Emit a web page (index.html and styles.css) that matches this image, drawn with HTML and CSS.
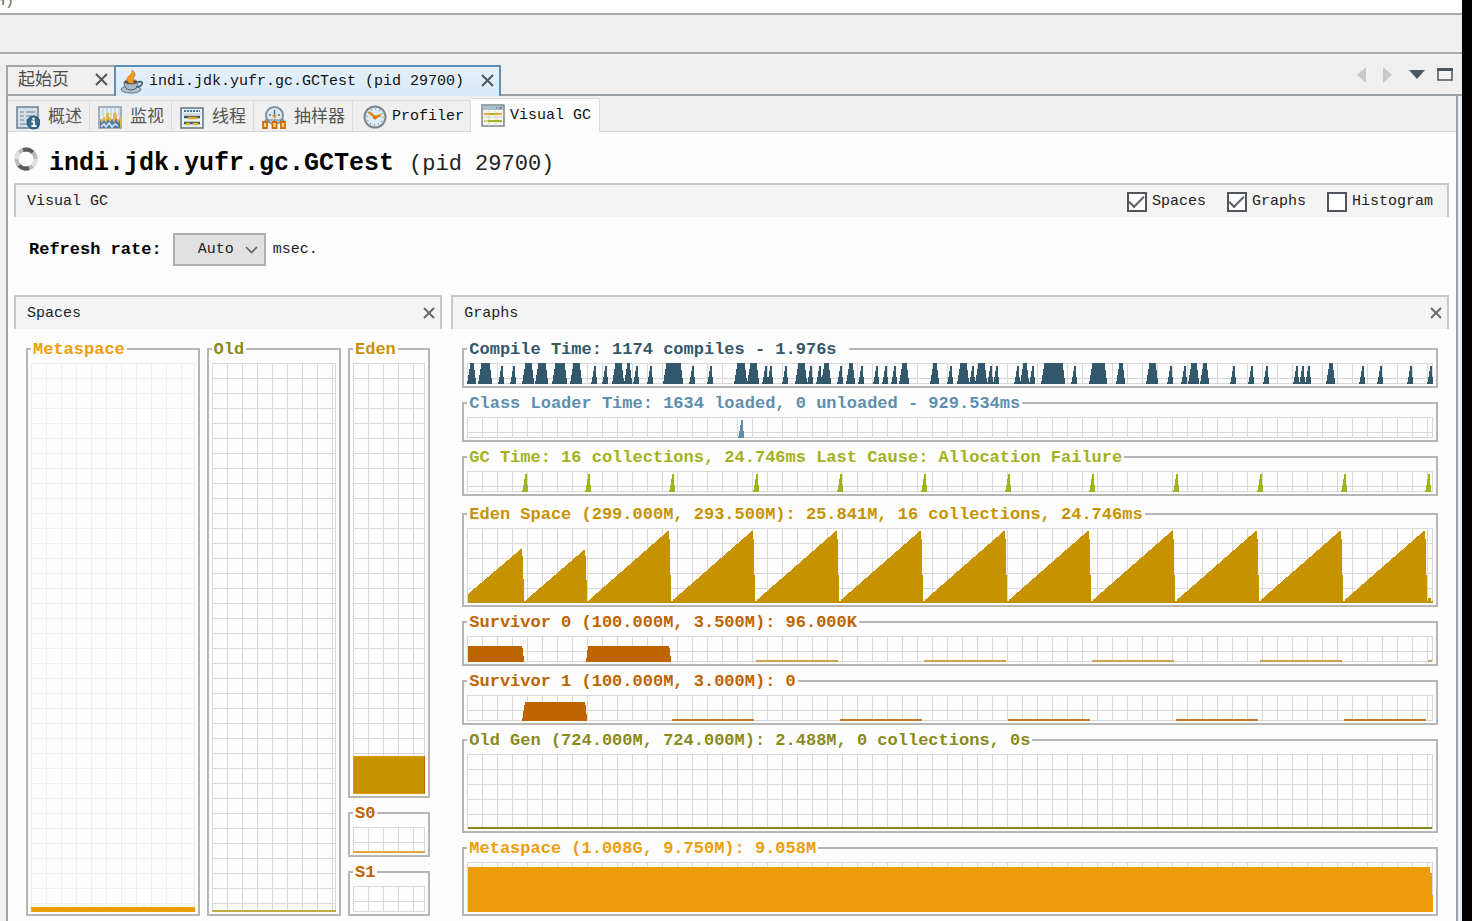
FILE: index.html
```html
<!DOCTYPE html>
<html lang="zh-CN">
<head>
<meta charset="utf-8">
<title>VisualVM</title>
<link rel="stylesheet" href="styles.css">
</head>
<body>
<div class="window">
  <div class="menubar"><span>H)</span></div>
  <div class="toolbar"></div>

  <div class="doc-tabs">
    <div class="doc-tab">
      <span>起始页</span>
      <button class="close" aria-label="关闭起始页"><svg width="13" height="13" viewBox="0 0 13 13"><path d="M1 1l11 11M12 1L1 12"/></svg></button>
    </div>
    <div class="doc-tab doc-tab-active">
      <svg width="24" height="24" viewBox="0 0 24 24">
        <ellipse cx="11" cy="19.500" rx="10" ry="3.500" fill="#b3c1cc" stroke="#5d7285"/>
        <path d="M4 12q0 8 7 8t7-8z" fill="#a9bbc8" stroke="#4b657a"/>
        <path d="M18 12q5-1 4 2t-6 3" fill="none" stroke="#4b657a" stroke-width="2"/>
        <ellipse cx="11" cy="12" rx="7" ry="2.500" fill="#5b4636" stroke="#8ea4b5"/>
        <path d="M9 13Q5 8 10 5q3-2 2-5 5 4 2 7-2 2 0 6z" fill="#ef9a22" stroke="#cf7a10" stroke-width=".7"/>
      </svg>
      <span>indi.jdk.yufr.gc.GCTest (pid 29700)</span>
      <button class="close" aria-label="关闭 GCTest"><svg width="13" height="13" viewBox="0 0 13 13"><path d="M1 1l11 11M12 1L1 12"/></svg></button>
    </div>
    <div class="doc-nav">
      <button aria-label="向左"><svg width="9" height="16" viewBox="0 0 9 16"><path d="M9 0v16L0 8z" fill="#c6c8c9"/></svg></button>
      <button aria-label="向右"><svg width="9" height="16" viewBox="0 0 9 16"><path d="M0 0v16l9-8z" fill="#c6c8c9"/></svg></button>
      <button aria-label="文档列表"><svg width="16" height="9" viewBox="0 0 16 9"><path d="M0 0h16L8 9z" fill="#4d555c"/></svg></button>
      <button aria-label="最大化"><svg width="16" height="13" viewBox="0 0 16 13"><path d="M1 1h14v11H1z" fill="#f3f3f3" stroke="#4d555c" stroke-width="1.500"/><path d="M0 0h16v3H0z" fill="#4d555c"/></svg></button>
    </div>
  </div>

  <div class="editor">
    <nav class="view-tabs">
      <button class="view-tab">
        <svg width="24" height="24" viewBox="0 0 24 24"><path d="M1 1h21v21H1z" fill="#d3dfe8" stroke="#6d7f8d" stroke-width="1.500"/><path d="M4 6h4M10 6h9M4 10h4M10 10h9M4 14h4M10 14h5M4 18h7" stroke="#8da3b4" stroke-width="1.500"/><circle cx="17.500" cy="16.500" r="6.500" fill="#39698c" stroke="#2b536f"/><path d="M15.500 15.500h2.500v4.500M15.500 20h5" stroke="#fff" stroke-width="1.800" fill="none"/><circle cx="17.500" cy="12.700" r="1.200" fill="#fff"/></svg>
        <span>概述</span>
      </button>
      <button class="view-tab">
        <svg width="24" height="24" viewBox="0 0 24 24"><path d="M1 1h22v21H1z" fill="#e3edf4" stroke="#8b9aa6" stroke-width="1.500"/><path d="M5 1v9M9 1v9M13 1v9M17 1v9M21 1v9" stroke="#b8c6d0"/><path d="M2 21v-8h3v-2h2v2h1V7h3v4h2v2h2V8l2-2 2 2v5h2v-2h2v10z" fill="#e5b35a"/><path d="M2 22v-8l2 3 2-3 2 3 2-4 2 3 2-3 2 4 2-5 2 5 2-3v8z" fill="#4f7ea6"/><path d="M3 21l3-3 2 3 3-4 3 4 3-3 3 2" stroke="#dbe8f1" stroke-width="1.500" fill="none"/></svg>
        <span>监视</span>
      </button>
      <button class="view-tab">
        <svg width="24" height="24" viewBox="0 0 24 24"><path d="M1 2h22v20H1z" fill="#e9eff3" stroke="#5f7486" stroke-width="1.500"/><path d="M4 5h16" stroke="#3f78a8" stroke-width="2" stroke-dasharray="2 1"/><path d="M3 8h18" stroke="#b7c6d1"/><path d="M4 11h16" stroke="#3d5870" stroke-width="2.500"/><path d="M8 12h9" stroke="#e5a81d" stroke-width="2.500"/><path d="M4 17h16" stroke="#3d5870" stroke-width="2.500"/><path d="M6 18h4M13 18h5" stroke="#e8bd22" stroke-width="2.500"/></svg>
        <span>线程</span>
      </button>
      <button class="view-tab">
        <svg width="24" height="24" viewBox="0 0 24 24"><circle cx="12.500" cy="9.500" r="8.500" fill="#dceaf4" stroke="#80909c" stroke-width="2"/><path d="M12.500 4v7M7 9h2M16 9h2" stroke="#557188" stroke-width="1.500"/><path d="M10 9l2.500 4L15 9z" fill="#df9231"/><path d="M3 17v-3h19v3M12.500 14v3" stroke="#6b7b86" fill="none"/><path d="M1 16h4v6H1zM10.500 16h4v6h-4zM19 16h4v6h-4z" fill="#fbdc84" stroke="#cf6e08" stroke-width="1.800"/></svg>
        <span>抽样器</span>
      </button>
      <button class="view-tab">
        <svg width="24" height="24" viewBox="0 0 24 24"><circle cx="12" cy="12" r="10.500" fill="#dcebf6" stroke="#7b868e" stroke-width="2"/><circle cx="12" cy="12" r="8" fill="none" stroke="#6f8ea6" stroke-width="1.500" stroke-dasharray="1 3.190"/><path d="M6 7l6 5.500L18 10" fill="none" stroke="#e08a1c" stroke-width="2.500"/><circle cx="12" cy="12.500" r="2" fill="#d97812"/></svg>
        <span class="latin">Profiler</span>
      </button>
      <button class="view-tab view-tab-active">
        <svg width="24" height="24" viewBox="0 0 24 24"><path d="M1 1h22v21H1z" fill="#f5f5ee" stroke="#7b8790" stroke-width="1.500"/><path d="M2 2h20v4H2z" fill="#aac0d0"/><path d="M15 4h1M18 4h3" stroke="#456"/><path d="M8 7v15M15 7v15M2 13h20" stroke="#d2d5cd"/><path d="M3 10h7M14 10h7" stroke="#e3ad36" stroke-width="2"/><path d="M9 10h5" stroke="#a4b52a" stroke-width="2"/><path d="M7 17h14" stroke="#a4b52a" stroke-width="2"/><path d="M3 17h4" stroke="#e3cf80" stroke-width="2"/></svg>
        <span class="latin">Visual GC</span>
      </button>
    </nav>

    <header class="title">
      <svg width="24" height="24" viewBox="0 0 24 24" fill="none" stroke-width="4"><circle cx="12" cy="12" r="9.500" stroke="#b9bcbe"/><path d="M9 3A9.500 9.500 0 0 1 18.700 5.300M15 21A9.500 9.500 0 0 1 5 18.500" stroke="#5a5d60"/><path d="M2.500 12A9.500 9.500 0 0 1 5 5.500M21.500 12a9.500 9.500 0 0 1-3 7" stroke="#dfe1e2"/></svg>
      <h1>indi.jdk.yufr.gc.GCTest <span>(pid 29700)</span></h1>
    </header>

    <main>
      <div class="bar">
        <span>Visual GC</span>
        <div class="checks">
          <label><input type="checkbox" checked>Spaces</label>
          <label><input type="checkbox" checked>Graphs</label>
          <label><input type="checkbox">Histogram</label>
        </div>
      </div>

      <div class="refresh">
        <label for="rate">Refresh rate:</label>
        <span class="select">
          <select id="rate"><option>Auto</option></select>
          <svg width="13" height="8" viewBox="0 0 13 8"><path d="M1 1l5.500 5.500L12 1" fill="none" stroke="#5c6266" stroke-width="1.600"/></svg>
        </span>
        <span>msec.</span>
      </div>

      <div class="panels">
        <section>
          <div class="bar">
            <span>Spaces</span>
            <button class="close close-bold" aria-label="Close Spaces"><svg width="12" height="12" viewBox="0 0 12 12"><path d="M1 1l10 10M11 1L1 11"/></svg></button>
          </div>
          <div class="spaces">
            <fieldset class="meta faint"><legend>Metaspace</legend><div class="plot"><div class="level" style="height:5px"></div></div></fieldset>
            <fieldset class="old"><legend>Old</legend><div class="plot"><div class="level thin-old" style="height:2px"></div></div></fieldset>
            <div class="young">
              <fieldset class="eden grow"><legend>Eden</legend><div class="plot"><div class="level edged" style="height:38px"></div></div></fieldset>
              <fieldset class="surv"><legend>S0</legend><div class="plot"><div class="level thin" style="height:2px"></div></div></fieldset>
              <fieldset class="surv"><legend>S1</legend><div class="plot"></div></fieldset>
            </div>
          </div>
        </section>

        <section>
          <div class="bar">
            <span>Graphs</span>
            <button class="close close-bold" aria-label="Close Graphs"><svg width="12" height="12" viewBox="0 0 12 12"><path d="M1 1l10 10M11 1L1 11"/></svg></button>
          </div>
          <div class="graphs">
            <fieldset class="compile"><legend>Compile Time: 1174 compiles - 1.976s&nbsp;</legend><div class="plot h-small"><svg id="g-compile" viewBox="0 0 966 21" preserveAspectRatio="none"></svg></div></fieldset>
            <fieldset class="loader"><legend>Class Loader Time: 1634 loaded, 0 unloaded - 929.534ms</legend><div class="plot h-small"><svg id="g-loader" viewBox="0 0 966 21" preserveAspectRatio="none"></svg></div></fieldset>
            <fieldset class="gc"><legend>GC Time: 16 collections, 24.746ms Last Cause: Allocation Failure</legend><div class="plot h-small"><svg id="g-gc" viewBox="0 0 966 21" preserveAspectRatio="none"></svg></div></fieldset>
            <fieldset class="eden spaced"><legend>Eden Space (299.000M, 293.500M): 25.841M, 16 collections, 24.746ms</legend><div class="plot h-large"><svg id="g-eden" viewBox="0 0 966 75" preserveAspectRatio="none"></svg></div></fieldset>
            <fieldset class="surv"><legend>Survivor 0 (100.000M, 3.500M): 96.000K</legend><div class="plot h-medium"><svg id="g-s0" viewBox="0 0 966 25" preserveAspectRatio="none"></svg></div></fieldset>
            <fieldset class="surv"><legend>Survivor 1 (100.000M, 3.000M): 0</legend><div class="plot h-medium"><svg id="g-s1" viewBox="0 0 966 25" preserveAspectRatio="none"></svg></div></fieldset>
            <fieldset class="old"><legend>Old Gen (724.000M, 724.000M): 2.488M, 0 collections, 0s</legend><div class="plot h-large"><svg viewBox="0 0 966 75" preserveAspectRatio="none"><path d="M1 73h964v2H1z"/></svg></div></fieldset>
            <fieldset class="meta"><legend>Metaspace (1.008G, 9.750M): 9.058M</legend><div class="plot h-meta"><svg viewBox="0 0 966 50" preserveAspectRatio="none"><path d="M1 5h962v6h2v22h1v17H1z"/></svg></div></fieldset>
          </div>
        </section>
      </div>
    </main>
  </div>
</div>
<script src="graphs.js"></script>
</body>
</html>
```
FILE: styles.css
```css
* { box-sizing: border-box; }

body {
  margin: 0;
  min-height: 100vh;
  display: flex;
  background: #000;
  padding-right: 10px;
  font: 15px/18px "Liberation Mono", "Noto Sans CJK SC", monospace;
  color: #222;
}

button {
  font: inherit;
  color: inherit;
  background: none;
  border: 0;
  padding: 0;
  display: flex;
}

.window {
  flex: 1;
  min-width: 0;
  display: flex;
  flex-direction: column;
  background: #efefef;
}

.menubar {
  height: 13px;
  display: flex;
  align-items: flex-end;
  overflow: hidden;
  background: #fff;
  color: #666;
  padding-bottom: 2px;
}
.menubar span { margin-left: -4px; }

.toolbar {
  height: 41px;
  border-top: 2px solid #a9a9a9;
  border-bottom: 2px solid #a9a9a9;
}

.doc-tabs {
  display: flex;
  margin-top: 11px;
  padding-left: 6px;
  height: 31px;
}
.doc-tab {
  display: flex;
  align-items: center;
  border: 2px solid #a0a6aa;
  border-right: 0;
  padding: 0 6px 0 10px;
  gap: 26px;
  font-size: 17px;
  color: #4c4c4c;
}
.doc-tab-active {
  border: 2px solid #5c8fb4;
  border-bottom: 0;
  background: linear-gradient(#e6f0fa, #d9eafa);
  padding: 0 5px 0 4px;
  gap: 5px;
  font-size: 15px;
  color: #111;
}
.doc-tab-active .close { margin-left: 12px; }

.close { padding-bottom: 2px; }
.close svg { fill: none; stroke: #50565a; stroke-width: 2; }
.close-bold svg { stroke: #666b6f; }

.doc-nav {
  flex: 1;
  display: flex;
  align-items: center;
  justify-content: flex-end;
  gap: 16px;
  padding: 0 9px 10px 0;
  border-bottom: 2px solid #9aa0a4;
}
.doc-nav button:nth-child(-n+2) { margin-right: 1px; }
.doc-nav button:nth-child(4) { margin-left: -4px; }

.editor {
  flex: 1;
  margin: 0 4px 0 6px;
  border: 2px solid #9aa4ae;
  border-width: 0 2px;
  background: #fdfdfd;
}

.view-tabs {
  display: flex;
  align-items: flex-end;
  height: 36px;
  background: #efefef;
  border-bottom: 1px solid #d6d6d6;
}
.view-tab {
  height: 31px;
  align-items: center;
  gap: 8px;
  padding: 3px 7px 0 8px;
  border: 1px solid #dcdcdc;
  border-width: 1px 1px 0 0;
  font-size: 17px;
  color: #555;
}
.view-tab .latin { font-size: 15px; color: #111; }
.view-tab:nth-child(5) { gap: 5px; padding: 2px 6px 0 10px; }
.view-tab-active {
  height: 34px;
  gap: 5px;
  padding: 0 8px 0 10px;
  margin-bottom: -1px;
  background: #fdfdfd;
}

.title {
  display: flex;
  gap: 11px;
  padding: 15px 0 0 6px;
  height: 51px;
}
.title h1 {
  margin: 0;
  padding-top: 3px;
  font-size: 25px;
  line-height: 28px;
  color: #000;
}
.title h1 span { font-size: 22px; font-weight: 400; color: #222; }

main { padding: 0 7px 6px 6px; }

.bar {
  display: flex;
  align-items: center;
  justify-content: space-between;
  height: 34px;
  padding: 2px 5px 0 11px;
  border: 2px solid #c8c8c8;
  border-bottom: 0;
  background: #f4f4f4;
}
.checks { display: flex; gap: 21px; padding-right: 9px; }
.checks label { display: flex; align-items: center; gap: 5px; }
.checks input {
  appearance: none;
  width: 20px;
  height: 20px;
  margin: 0;
  border: 2px solid #50565c;
  background: #fff;
  display: grid;
  place-items: center;
}
.checks input:checked::before {
  content: "";
  width: 13px;
  height: 6px;
  margin-bottom: 5px;
  border: solid #5c6266;
  border-width: 0 0 2px 2px;
  transform: rotate(-45deg);
}

.refresh {
  display: flex;
  align-items: center;
  gap: 7px;
  padding: 16px 0 29px 15px;
}
.refresh label { font-size: 17px; font-weight: 700; color: #000; }
.select { display: grid; align-items: center; margin-left: 4px; }
.select > * { grid-area: 1 / 1; }
.select svg { justify-self: end; margin-right: 8px; pointer-events: none; }
.select select {
  appearance: none;
  width: 93px;
  height: 33px;
  padding: 0 0 0 23px;
  border: 2px solid #adb0b0;
  border-radius: 0;
  background: #e1e1e1;
  font: inherit;
  color: #222;
}

.panels {
  display: grid;
  grid-template-columns: 428fr 997fr;
  gap: 9px;
}
section { display: flex; flex-direction: column; min-width: 0; }

.spaces, .graphs { flex: 1; padding: 10px 11px 0; }
.spaces {
  display: grid;
  grid-template-columns: 173fr 134fr 82fr;
  gap: 7px;
  padding-left: 12px;
  padding-right: 12px;
}
.young, .graphs { display: flex; flex-direction: column; gap: 5px; }

fieldset {
  margin: 0;
  min-width: 0;
  padding: 4px 3px 2px;
  border: 2px solid #b6b6b6;
  display: flex;
}
legend {
  padding: 2px 2px 0;
  font-size: 17px;
  font-weight: 700;
  line-height: 18px;
  white-space: nowrap;
  color: var(--tone);
}
.grow { flex: 1; }
.spaced { margin-top: 3px; }

.plot {
  --line: #d8d8d8;
  flex: 1;
  min-height: 26px;
  display: flex;
  align-items: flex-end;
  background:
    linear-gradient(var(--line), var(--line)) right / 1px 100% no-repeat,
    linear-gradient(var(--line), var(--line)) bottom / 100% 1px no-repeat,
    linear-gradient(90deg, var(--line) 1px, transparent 1px) 0 0 / 15px 15px,
    linear-gradient(var(--line) 1px, transparent 1px) 0 0 / 15px 15px;
}
.faint .plot { --line: #efefef; }
.plot svg {
  display: block;
  width: 100%;
  height: 100%;
  fill: var(--tone);
  shape-rendering: crispEdges;
}
.h-small { min-height: 0; height: 21px; }
.h-medium { height: 26px; }
.h-large { height: 75px; }
.h-meta { height: 50px; }

.level { width: 100%; background: var(--tone); }
.edged { border: 1px solid #e09a10; border-right-color: #bf6300; }
.thin { background: #e5a53a; }
.thin-old { background: #c3ae3c; }

.compile { --tone: #34586b; }
.loader { --tone: #5d8eae; }
.gc { --tone: #a3b121; }
.eden { --tone: #c79200; }
.surv { --tone: #be6400; }
.old { --tone: #8a8a1c; }
.meta { --tone: #ed9d0b; }
```
FILE: graphs.js
```js
// Blocks are [start, end]; spikes are the start of a narrow sample.
const compileBlocks = [[0, 9], [11, 25], [55, 67], [68, 81], [85, 100], [103, 115],
  [145, 157], [157, 165], [196, 216], [267, 280], [280, 292], [328, 340], [354, 364],
  [379, 388], [432, 442], [463, 472], [490, 502], [508, 520], [553, 562], [574, 598],
  [622, 640], [649, 658], [679, 691], [721, 732], [733, 742], [859, 868]];
const compileSpikes = [31, 43, 124, 135, 166, 180, 222, 240, 295, 300, 315, 340, 349,
  370, 391, 406, 415, 424, 480, 502, 520, 526, 547, 562, 604, 700, 714, 763, 781,
  796, 826, 832, 838, 892, 910, 940, 960];
const gcSpikes = [55, 118, 202, 286, 370, 454, 538, 622, 706, 790, 874, 958];

const spike = x => `M${x} 21v-2h1v-5h1V8h1V3h2v11h1v7z`;
const block = ([a, b]) =>
  `M${a} 21v-3h1v-6h1V6h1V0H${b - 2}v7h1v8h1v6z`;

const draw = (id, d, fill) => {
  const path = document.createElementNS('http://www.w3.org/2000/svg', 'path');
  path.setAttribute('d', d);
  if (fill) path.style.fill = fill;
  document.getElementById(id).append(path);
};

draw('g-compile', compileBlocks.map(block).join('') + compileSpikes.map(spike).join(''));
draw('g-loader', spike(271));
draw('g-gc', gcSpikes.map(spike).join(''));

// Eden fills up, then drops at each collection.
let eden = 'M1 74V66L54 21h1v7h1v23h1v23zM59 74v-2L117 22h1v6h1v24h1v22z';
for (let x = 122; x < 900; x += 84) {
  eden += `M${x} 74v-2L${x + 79} 3h1v8h1v36h1v27z`;
}
draw('g-eden', eden + 'M961 74v-4h3v4zM1 73h965v2H1z');

const flat = from => {
  let d = '';
  for (let x = from; x < 960; x += 168) d += `M${x} 23h82v2h-82z`;
  return d;
};
draw('g-s0', 'M1 25V10h54l1 3 1 12zM119 25l2-15h81l1 2 1 13z');
draw('g-s0', flat(289) + 'M961 23h4v2h-4z', '#cda24e');
draw('g-s1', 'M55 25l3-18h60l1 4 1 14z');
draw('g-s1', flat(205), '#c27a26');
```
